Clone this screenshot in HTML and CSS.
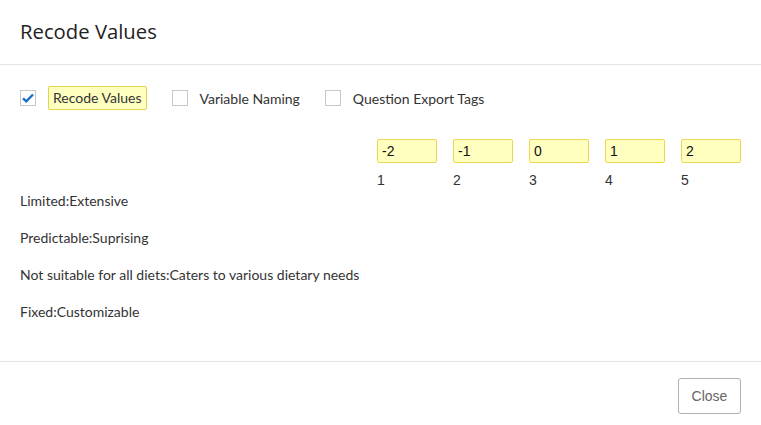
FILE: index.html
```html
<!DOCTYPE html>
<html>
<head>
<meta charset="utf-8">
<link rel="stylesheet" href="styles.css">
</head>
<body>
<div class="dialog">
  <div class="header"><h1 class="title">Recode Values</h1></div>
  <div class="content">
    <div class="options">
      <label class="opt"><span class="box checked"><svg width="12" height="10" viewBox="0 0 12 10"><path d="M1 5.3 L4.3 8.3 L11 1.5" fill="none" stroke="#1a6fc4" stroke-width="2.4"/></svg></span><span class="opt-text hl">Recode Values</span></label>
      <label class="opt"><span class="box"></span><span class="opt-text">Variable Naming</span></label>
      <label class="opt"><span class="box"></span><span class="opt-text">Question Export Tags</span></label>
    </div>
    <div class="grid">
      <div class="cell"><div class="inp">-2</div><div class="num">1</div></div>
      <div class="cell"><div class="inp">-1</div><div class="num">2</div></div>
      <div class="cell"><div class="inp">0</div><div class="num">3</div></div>
      <div class="cell"><div class="inp">1</div><div class="num">4</div></div>
      <div class="cell"><div class="inp">2</div><div class="num">5</div></div>
    </div>
    <div class="rows">
      <div class="row">Limited:Extensive</div>
      <div class="row">Predictable:Suprising</div>
      <div class="row">Not suitable for all diets:Caters to various dietary needs</div>
      <div class="row">Fixed:Customizable</div>
    </div>
  </div>
  <div class="footer"><button class="btn">Close</button></div>
</div>
</body>
</html>
```
FILE: styles.css
```css
html, body { margin: 0; padding: 0; background: #fff; }
body { width: 761px; height: 425px; overflow: hidden; font-family: Lato, "Open Sans", sans-serif; color: #2b2b2b; }
.dialog { display: flex; flex-direction: column; height: 425px; }
.header { height: 65px; border-bottom: 1px solid #e4e4e4; box-sizing: border-box; padding: 0 20px 2px 20px; display: flex; align-items: center; }
.title { margin: 0; font-size: 20.3px; font-weight: 400; color: #222; font-family: "Open Sans", sans-serif; }
.content { height: 297px; border-bottom: 1px solid #e4e4e4; box-sizing: border-box; padding: 21px 20px 0 20px; }
.options { display: flex; align-items: center; height: 24px; }
.opt { display: flex; align-items: center; margin-right: 25px; }
.box { width: 14px; height: 14px; border: 1px solid #c8c8c8; display: flex; align-items: center; justify-content: center; margin-right: 12px; }
.opt-text { font-size: 14px; color: #333; }
.hl { background: #ffffc0; border: 1px solid #e6d44a; border-radius: 2px; padding: 0 4px; height: 22px; line-height: 22px; }
.grid { display: flex; gap: 16px; margin-left: 357px; margin-top: 29px; }
.cell { width: 60px; }
.inp { height: 22px; border: 1px solid #eed64e; background: #ffffc0; border-radius: 2px; font-family: "Liberation Sans", Arial, sans-serif; font-size: 14px; line-height: 22px; padding-left: 4px; color: #111; }
.num { font-family: "Liberation Sans", Arial, sans-serif; font-size: 14px; color: #333; margin-top: 9px; line-height: 16px; }
.rows { margin-top: 4px; }
.row { font-size: 14px; line-height: 18px; margin-bottom: 19px; color: #333; }
.footer { flex: 1; display: flex; justify-content: flex-end; align-items: flex-start; padding: 16px 20px 0 0; }
.btn { width: 63px; height: 36px; border: 1px solid #b0b0b0; border-radius: 3px; background: #fff; font-family: "Liberation Sans", Arial, sans-serif; font-size: 14px; color: #666; padding: 0; }
```
